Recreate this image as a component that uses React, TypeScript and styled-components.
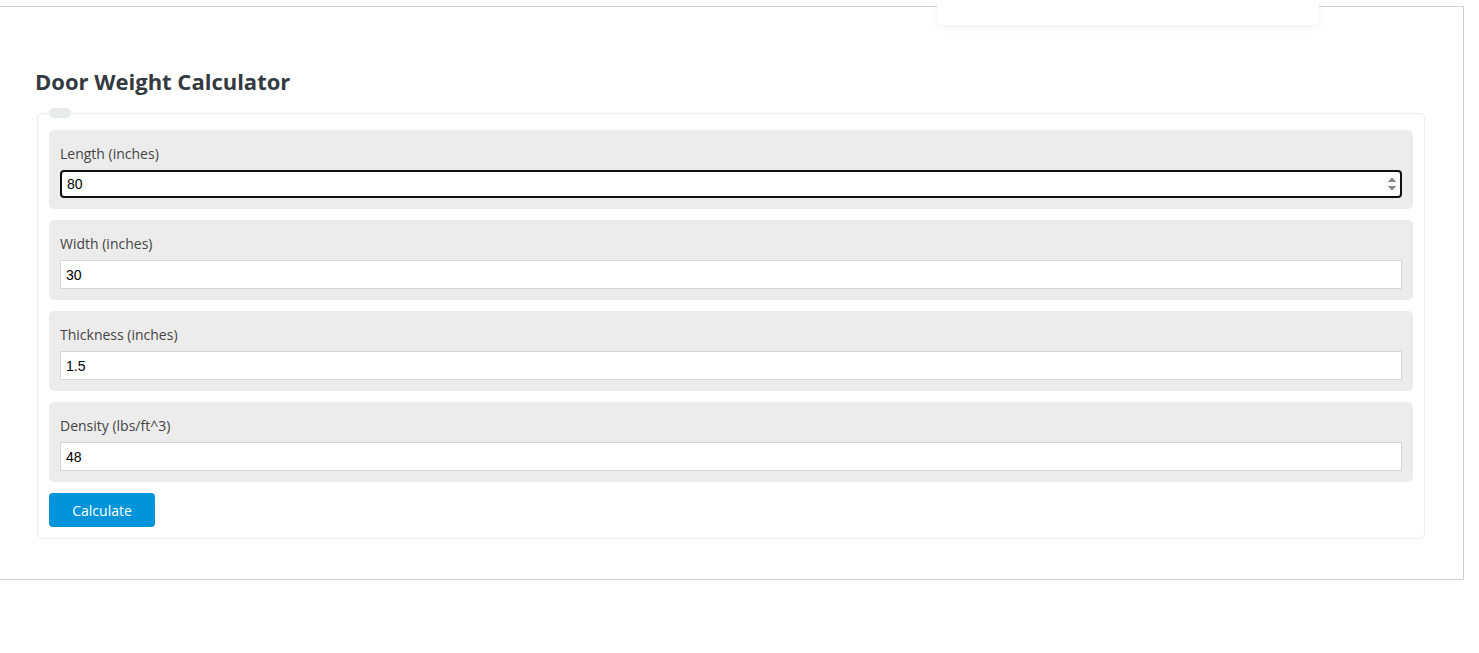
import React from "react";
import styled, { createGlobalStyle } from "styled-components";

const GlobalStyle = createGlobalStyle`
  html, body {
    margin: 0;
    padding: 0;
    background: #fff;
    font-family: "Open Sans", "Noto Sans", Arial, sans-serif;
  }
`;

const Page = styled.div`
  margin: 6px 0 0 -1px;
  width: 1465px;
  height: 574px;
  box-sizing: border-box;
  border: 1px solid #cfcfd4;
  padding: 50px 38px 0 37px;
  position: relative;
`;

const FloatCard = styled.div`
  position: absolute;
  left: 937px;
  top: -40px;
  width: 382px;
  height: 58px;
  background: #fff;
  border-radius: 4px;
  box-shadow: 0 3px 10px rgba(0, 0, 0, 0.05);
`;

const Title = styled.h2`
  margin: 0 0 8px -2px;
  font-size: 22px;
  font-weight: 700;
  color: #343a40;
  line-height: 48px;
`;

const Fieldset = styled.fieldset`
  position: relative;
  margin: 0;
  padding: 16px 11px 11px 11px;
  border: 1px solid #ececec;
  border-radius: 6px;
  display: flex;
  flex-direction: column;
  gap: 11px;
`;

const Legend = styled.span`
  position: absolute;
  left: 11px;
  top: -6px;
  width: 22px;
  height: 10px;
  border-radius: 5px;
  background: #e9eaea;
`;

const Row = styled.div`
  background: #ebeceb;
  border-radius: 5px;
  padding: 13px 11px 11px 11px;
  display: flex;
  flex-direction: column;
  gap: 5px;
`;

const Label = styled.label`
  font-size: 14px;
  color: #454545;
  line-height: 22px;
`;

const Input = styled.input<{ $active?: boolean }>`
  box-sizing: border-box;
  width: 100%;
  height: ${(p) => (p.$active ? "28px" : "29px")};
  margin: 0;
  padding: 0 0 0 5px;
  font-family: Arial, "Liberation Sans", sans-serif;
  font-size: 14px;
  color: #000;
  background: #fff;
  border: ${(p) => (p.$active ? "2px solid #101010" : "1px solid #d6d6d6")};
  border-radius: ${(p) => (p.$active ? "4px" : "0")};
  outline: none;
  &::-webkit-inner-spin-button {
    opacity: ${(p) => (p.$active ? 1 : 0)};
  }
`;

const Button = styled.button`
  align-self: flex-start;
  width: 106px;
  height: 34px;
  border: none;
  border-radius: 4px;
  background: #0095da;
  color: #fff;
  font-family: "Open Sans", "Noto Sans", Arial, sans-serif;
  font-size: 14px;
  cursor: pointer;
`;

const fields = [
  { label: "Length (inches)", value: "80" },
  { label: "Width (inches)", value: "30" },
  { label: "Thickness (inches)", value: "1.5" },
  { label: "Density (lbs/ft^3)", value: "48" },
];

const App: React.FC = () => {
  return (
    <>
      <GlobalStyle />
      <Page>
        <FloatCard />
        <Title>Door Weight Calculator</Title>
        <Fieldset>
          <Legend />
          {fields.map((f, i) => (
            <Row key={f.label}>
              <Label>{f.label}</Label>
              <Input
                type="number"
                defaultValue={f.value}
                $active={i === 0}
                autoFocus={i === 0}
              />
            </Row>
          ))}
          <Button>Calculate</Button>
        </Fieldset>
      </Page>
    </>
  );
};

export default App;
